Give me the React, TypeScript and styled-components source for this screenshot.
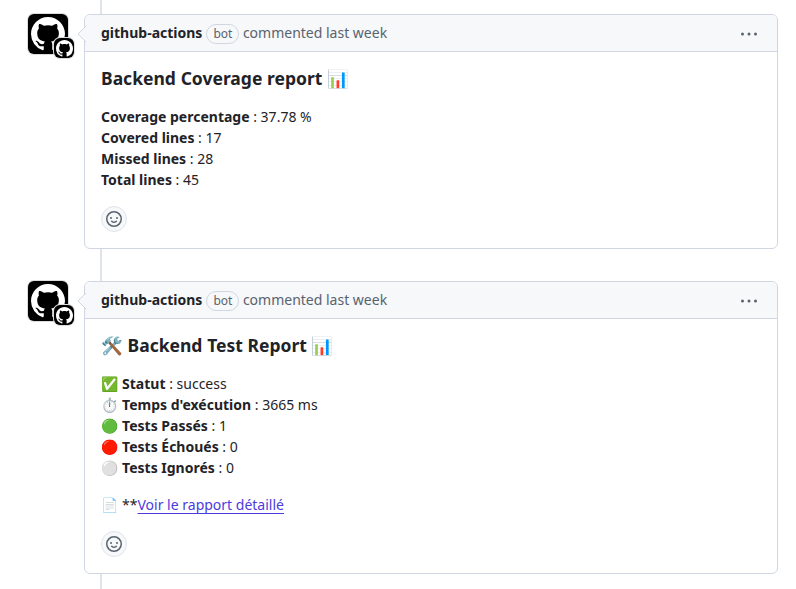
import React from "react";
import styled, { createGlobalStyle } from "styled-components";

const GlobalStyle = createGlobalStyle`
  * { box-sizing: border-box; }
  body {
    margin: 0;
    background: #fff;
    color: #1f2328;
    font: 14px/21px "Noto Sans", "Noto Color Emoji", sans-serif;
    overflow: hidden;
  }
`;

const Timeline = styled.main`
  position: relative;
  display: flex;
  flex-direction: column;
  gap: 32px;
  height: 589px;
  padding: 14px 18px 0 28px;
`;

const TimelineLine = styled.div`
  position: absolute;
  left: 100px;
  top: 0;
  bottom: 0;
  width: 2px;
  background: #dfe4eb;
`;

const Item = styled.article`
  position: relative;
  display: flex;
  gap: 16px;
`;

const AvatarStack = styled.div`
  position: relative;
  width: 40px;
  height: 40px;
  flex: none;
`;

const Avatar = styled.div`
  width: 40px;
  height: 40px;
  border-radius: 6px;
  background: #000;
  box-shadow: 0 0 0 1px #d9dddf;
  display: grid;
  place-items: center;
`;

const SmallAvatar = styled(Avatar)`
  position: absolute;
  left: 26px;
  top: 24px;
  width: 20px;
  height: 20px;
`;

const Card = styled.section<{ $height: number }>`
  position: relative;
  flex: 1;
  height: ${(p) => p.$height}px;
  background: #fff;
  border: 1px solid #d0d7e2;
  border-radius: 6px;
`;

const Caret = styled.svg`
  position: absolute;
  left: -8px;
  top: 10px;
  width: 9px;
  height: 18px;
`;

const Header = styled.header`
  display: flex;
  align-items: center;
  height: 37px;
  padding: 0 16px;
  background: #f6f8fa;
  border-bottom: 1px solid #d0d7e2;
  border-radius: 5px 5px 0 0;
  color: #59636e;
`;

const HeaderText = styled.span`
  padding-bottom: 2px;
`;

const Author = styled(HeaderText).attrs({ as: "strong" })`
  color: #1f2328;
  font-weight: 700;
`;

const BotLabel = styled.span`
  height: 20px;
  margin: 2px 3.5px 0 4px;
  padding: 0 6px;
  border: 1px solid #d0d7e2;
  border-radius: 10px;
  font-size: 12px;
  line-height: 18px;
`;

const Menu = styled.svg`
  width: 18px;
  height: 18px;
  margin: 1px 3px 0 auto;
  fill: #59636e;
`;

const Body = styled.div`
  padding: 15px 16px 16px;
`;

const Title = styled.h3`
  margin: 0 0 17px;
  font-size: 17.5px;
  font-weight: 700;
  line-height: 22px;
  word-spacing: 0.2px;
`;

const Paragraph = styled.p`
  margin: 0 0 16px;
`;

const Line = styled.span`
  display: block;
  height: 21px;
  white-space: pre;
`;

const Label = styled.strong`
  font-weight: 700;
`;

const Emoji = styled.span<{ $filter?: string }>`
  filter: ${(p) => p.$filter ?? "none"};
`;

const Link = styled.a`
  color: #4c3bdd;
  text-decoration: underline;
  text-underline-offset: 3px;
`;

const Reaction = styled.button`
  display: grid;
  place-items: center;
  width: 26px;
  height: 26px;
  padding: 0;
  border: 1px solid #dfe4eb;
  border-radius: 50%;
  background: #f6f8fa;
`;

function Mark({ size }: { size: number }) {
  return (
    <svg width={size} height={size} viewBox="0 0 16 16" fill="#fff">
      <path d="M8 0c4.42 0 8 3.58 8 8a8.013 8.013 0 0 1-5.45 7.59c-.4.08-.55-.17-.55-.38 0-.27.01-1.13.01-2.2 0-.75-.25-1.23-.54-1.48 1.78-.2 3.65-.88 3.65-3.95 0-.88-.31-1.59-.82-2.15.08-.2.36-1.02-.08-2.12 0 0-.67-.22-2.2.82-.64-.18-1.32-.27-2-.27-.68 0-1.36.09-2 .27-1.53-1.03-2.2-.82-2.2-.82-.44 1.1-.16 1.92-.08 2.12-.51.56-.82 1.28-.82 2.15 0 3.06 1.86 3.75 3.64 3.95-.23.2-.44.55-.51 1.07-.46.21-1.61.55-2.33-.66-.15-.24-.6-.83-1.23-.82-.67.01-.27.38.01.53.34.19.73.9.82 1.13.16.45.68 1.31 2.69.94 0 .67.01 1.3.01 1.49 0 .21-.15.45-.55.38A7.995 7.995 0 0 1 0 8c0-4.42 3.58-8 8-8Z" />
    </svg>
  );
}

function Smiley() {
  return (
    <svg width="16" height="16" viewBox="0 0 16 16" fill="#59636e">
      <path d="M8 0a8 8 0 1 1 0 16A8 8 0 0 1 8 0ZM1.5 8a6.5 6.5 0 1 0 13 0 6.5 6.5 0 0 0-13 0Zm3.82 1.636a.75.75 0 0 1 1.038.175l.007.009c.103.118.22.222.35.31.264.178.683.37 1.285.37.602 0 1.02-.192 1.285-.371.13-.088.247-.192.35-.31l.007-.008a.75.75 0 0 1 1.222.87l-.022-.015c.02.013.021.015.021.015v.001l-.001.002-.002.003-.005.007-.014.019a2.066 2.066 0 0 1-.184.213c-.16.166-.338.316-.53.445-.63.418-1.37.638-2.127.629-.946 0-1.652-.308-2.126-.63a3.331 3.331 0 0 1-.715-.657l-.014-.02-.005-.006-.002-.003v-.002h-.001l.613-.432-.614.43a.75.75 0 0 1 .183-1.044ZM12 7a1 1 0 1 1-2 0 1 1 0 0 1 2 0ZM5 8a1 1 0 1 1 0-2 1 1 0 0 1 0 2Z" />
    </svg>
  );
}

function Comment({ height, children }: { height: number; children: React.ReactNode }) {
  return (
    <Item>
      <AvatarStack>
        <Avatar><Mark size={34} /></Avatar>
        <SmallAvatar><Mark size={17} /></SmallAvatar>
      </AvatarStack>
      <Card $height={height}>
        <Header>
          <Author>github-actions</Author>
          <BotLabel>bot</BotLabel>
          <HeaderText>commented last week</HeaderText>
          <Menu viewBox="0 0 18 18">
            <circle cx="2.5" cy="9" r="1.5" />
            <circle cx="9" cy="9" r="1.5" />
            <circle cx="15.5" cy="9" r="1.5" />
          </Menu>
        </Header>
        <Caret viewBox="0 0 9 18">
          <path d="M9 1L1 9L9 17" fill="#f6f8fa" stroke="#d0d7e2" />
        </Caret>
        <Body>
          {children}
          <Reaction aria-label="Add reaction"><Smiley /></Reaction>
        </Body>
      </Card>
    </Item>
  );
}

const vivid = "saturate(1.2)";

const coverage = [
  ["Coverage percentage", "37.78 %"],
  ["Covered lines", "17"],
  ["Missed lines", "28"],
  ["Total lines", "45"],
];

const tests = [
  { icon: "✅", label: "Statut", value: "success", filter: vivid },
  { icon: "⏱️", label: "Temps d'exécution", value: "3665 ms" },
  { icon: "🟢", label: "Tests Passés", value: "1", filter: "hue-rotate(12deg) saturate(1.15)" },
  { icon: "🔴", label: "Tests Échoués", value: "0", filter: "saturate(2.1)" },
  { icon: "⚪", label: "Tests Ignorés", value: "0" },
];

export default function App() {
  return (
    <>
      <GlobalStyle />
      <Timeline>
        <TimelineLine />
        <Comment height={235}>
          <Title>Backend Coverage report <Emoji $filter={vivid}>📊</Emoji></Title>
          <Paragraph>
            {coverage.map(([label, value]) => (
              <Line key={label}><Label>{label}</Label> : {value}</Line>
            ))}
          </Paragraph>
        </Comment>
        <Comment height={293}>
          <Title>🛠️ Backend Test Report <Emoji $filter={vivid}>📊</Emoji></Title>
          <Paragraph>
            {tests.map(({ icon, label, value, filter }) => (
              <Line key={label}><Emoji $filter={filter}>{icon}</Emoji> <Label>{label}</Label> : {value}</Line>
            ))}
          </Paragraph>
          <Paragraph>
            <Line>📄 **<Link>Voir le rapport détaillé</Link></Line>
          </Paragraph>
        </Comment>
      </Timeline>
    </>
  );
}
